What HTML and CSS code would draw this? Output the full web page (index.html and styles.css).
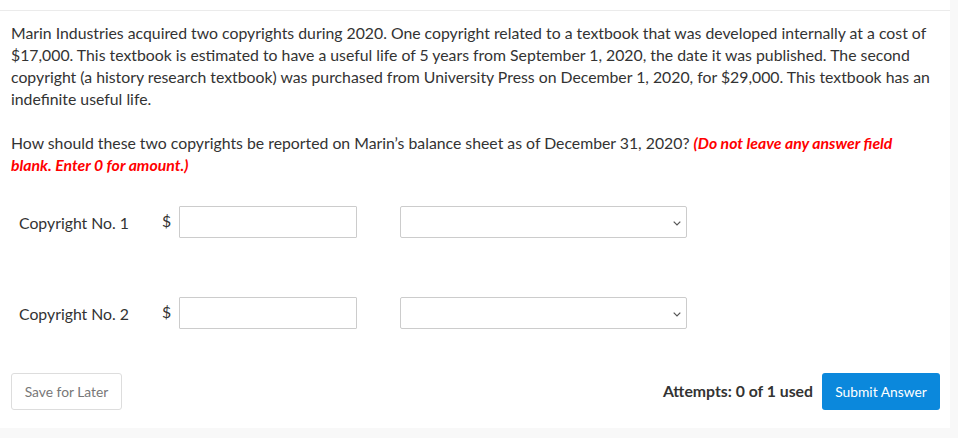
FILE: index.html
```html
<!DOCTYPE html>
<html>
<head>
<meta charset="utf-8">
<link rel="stylesheet" href="styles.css">
</head>
<body>
<div class="panel">
  <div class="topbar"></div>
  <div class="content">
    <p class="para">Marin Industries acquired two copyrights during 2020. One copyright related to a textbook that was developed internally at a cost of $17,000. This textbook is estimated to have a useful life of 5 years from September 1, 2020, the date it was published. The second copyright (a history research textbook) was purchased from University Press on December 1, 2020, for $29,000. This textbook has an indefinite useful life.</p>
    <p class="para">How should these two copyrights be reported on Marin’s balance sheet as of December 31, 2020? <em class="warn">(Do not leave any answer field blank. Enter 0 for amount.)</em></p>

    <div class="row row-first">
      <span class="label">Copyright No. 1</span>
      <span class="dollar">$</span>
      <input class="amount" type="text">
      <div class="select-wrap">
        <select class="select"><option></option></select>
        <svg class="chev" width="8" height="5" viewBox="0 0 8 5"><path d="M0.7 0.7 L4 4 L7.3 0.7" fill="none" stroke="#555" stroke-width="1.2"/></svg>
      </div>
    </div>
    <div class="row row-second">
      <span class="label">Copyright No. 2</span>
      <span class="dollar">$</span>
      <input class="amount" type="text">
      <div class="select-wrap">
        <select class="select"><option></option></select>
        <svg class="chev" width="8" height="5" viewBox="0 0 8 5"><path d="M0.7 0.7 L4 4 L7.3 0.7" fill="none" stroke="#555" stroke-width="1.2"/></svg>
      </div>
    </div>

    <div class="actions">
      <button class="btn-save">Save for Later</button>
      <div class="right">
        <span class="attempts">Attempts: 0 of 1 used</span>
        <button class="btn-submit">Submit Answer</button>
      </div>
    </div>
  </div>
</div>
</body>
</html>
```
FILE: styles.css
```css
html, body {
  margin: 0;
  padding: 0;
  background: #f8f8f8;
}
body {
  font-family: Lato, "Open Sans", sans-serif;
  color: #333;
  width: 958px;
  height: 438px;
  overflow: hidden;
}
.panel {
  width: 950px;
  height: 428px;
  background: #fff;
}
.topbar {
  height: 10px;
  border-bottom: 1px solid #ebebeb;
}
.content {
  padding: 11px 18px 0 11px;
}
.para {
  margin: 0 0 22px 0;
  font-size: 15.8px;
  line-height: 22px;
}
.warn {
  color: #f00;
  font-weight: 700;
  font-style: italic;
}
.row {
  display: flex;
  align-items: center;
  height: 32px;
}
.row-first {
  margin-top: 30px;
}
.row-second {
  margin-top: 59px;
}
.label {
  font-size: 15.8px;
  width: 151px;
  padding-left: 8px;
  box-sizing: border-box;
}
.dollar {
  font-size: 15.8px;
  width: 17px;
  margin-top: -3px;
}
.amount {
  width: 178px;
  height: 32px;
  box-sizing: border-box;
  border: 1px solid #ccc;
  border-radius: 1px;
  margin: 0;
  padding: 0 6px;
  font: inherit;
}
.select-wrap {
  position: relative;
  margin-left: 43px;
}
.select {
  appearance: none;
  -webkit-appearance: none;
  width: 287px;
  height: 32px;
  box-sizing: border-box;
  border: 1px solid #ccc;
  border-radius: 2px;
  background: #fff;
  margin: 0;
  display: block;
}
.chev {
  position: absolute;
  right: 6px;
  top: 15px;
  pointer-events: none;
}
.actions {
  display: flex;
  justify-content: space-between;
  align-items: center;
  margin-top: 44px;
  width: 929px;
}
.btn-save {
  font-family: Lato, sans-serif;
  font-size: 13.8px;
  color: #777;
  background: #fff;
  border: 1px solid #ddd;
  border-radius: 3px;
  height: 37px;
  width: 111px;
  padding: 0;
}
.right {
  display: flex;
  align-items: center;
  gap: 9px;
}
.attempts {
  font-size: 15.8px;
  font-weight: 700;
  color: #333;
  margin-top: -3px;
}
.btn-submit {
  font-family: Lato, sans-serif;
  font-size: 13.8px;
  color: #fff;
  background: #0b88dc;
  border: none;
  border-radius: 3px;
  height: 37px;
  width: 118px;
  padding: 0;
}
```
